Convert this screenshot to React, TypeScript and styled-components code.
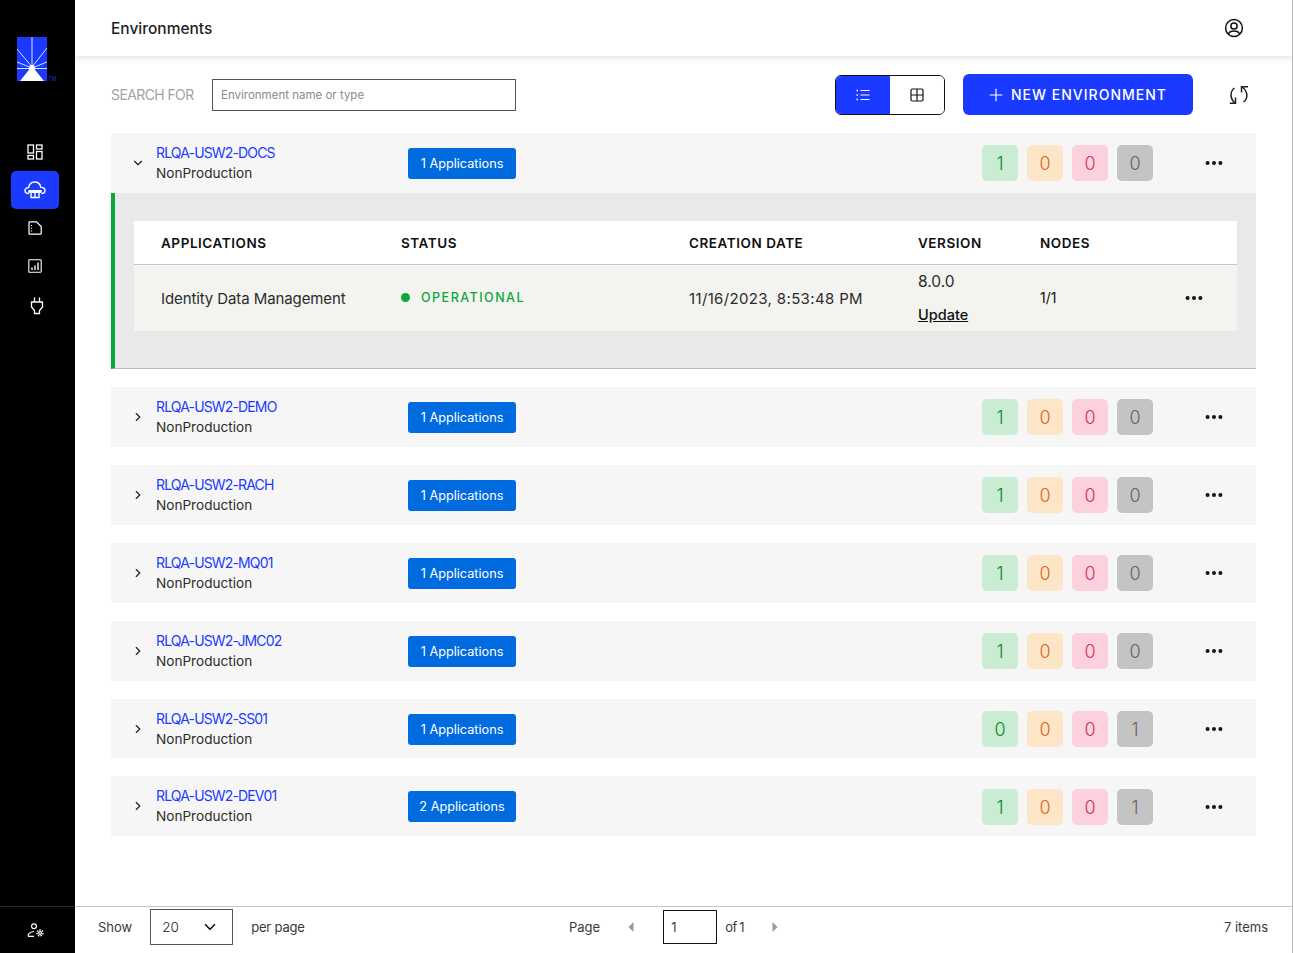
import React from "react"
import styled, { createGlobalStyle } from "styled-components"
import { ChevronDown, ChevronRight, Ellipsis, Plus } from "lucide-react"

const GlobalStyle = createGlobalStyle`
  html, body {
    margin: 0;
    padding: 0;
    height: 100%;
    background: #fff;
    font-family: Inter, "Liberation Sans", sans-serif;
    color: #1f1f24;
  }
  * { box-sizing: border-box; }
`

const Shell = styled.div`
  display: flex;
  height: 953px;
  overflow: hidden;
  border-right: 1px solid #b9b9b9;
`

const Sidebar = styled.nav`
  width: 75px;
  flex-shrink: 0;
  background: #000;
  display: flex;
  flex-direction: column;
  padding-top: 37px;
`

const LogoWrap = styled.div`
  width: 75px;
  height: 44px;
  padding-left: 17px;
  margin-bottom: 52px;
`

const NavList = styled.div`
  display: flex;
  flex-direction: column;
  padding-left: 11px;
  flex: 1;
`

const NavItem = styled.div<{ $active?: boolean }>`
  width: 48px;
  height: 38px;
  border-radius: 5px;
  display: flex;
  align-items: center;
  justify-content: center;
  background: ${(p) => (p.$active ? "#1a3bff" : "transparent")};
  color: #fff;
`

const SideFoot = styled.div`
  width: 75px;
  height: 47px;
  padding-right: 5px;
  display: flex;
  align-items: center;
  justify-content: center;
  color: #fff;
  border-top: 1px solid #2a2a2a;
`

const Main = styled.main`
  flex: 1;
  min-width: 0;
  display: flex;
  flex-direction: column;
`

const Header = styled.header`
  height: 56px;
  flex-shrink: 0;
  display: flex;
  align-items: center;
  justify-content: space-between;
  padding: 0 48px 0 36px;
  box-shadow: 0 2px 6px rgba(0, 0, 0, 0.12);
`

const Title = styled.h1`
  margin: 0;
  font-size: 15.5px;
  font-weight: 500;
  color: #1f1f24;
`

const Toolbar = styled.div`
  display: flex;
  align-items: center;
  height: 41px;
  margin: 18px 36px 18px 36px;
`

const SearchLabel = styled.span`
  width: 101px;
  font-size: 14px;
  letter-spacing: -0.6px;
  color: #a3a3a3;
`

const SearchInput = styled.div`
  width: 304px;
  height: 32px;
  border: 1px solid #555;
  font-size: 11.5px;
  color: #8b8b8b;
  display: flex;
  align-items: center;
  padding-left: 8px;
`

const ViewToggle = styled.div`
  display: flex;
  width: 110px;
  height: 40px;
  margin-left: auto;
  border: 1px solid #111;
  border-radius: 6px;
  overflow: hidden;
`

const ViewButton = styled.div<{ $active?: boolean }>`
  flex: 1;
  display: flex;
  align-items: center;
  justify-content: center;
  background: ${(p) => (p.$active ? "#1a3bff" : "#fff")};
  color: ${(p) => (p.$active ? "#fff" : "#111")};
`

const NewButton = styled.div`
  width: 230px;
  height: 41px;
  margin-left: 18px;
  padding-right: 3px;
  border-radius: 6px;
  background: #1a3bff;
  color: #fff;
  display: flex;
  align-items: center;
  justify-content: center;
  gap: 5px;
  font-size: 14px;
  font-weight: 500;
  letter-spacing: 1px;
`

const RefreshWrap = styled.div`
  width: 63px;
  display: flex;
  justify-content: flex-end;
  padding-right: 7px;
  color: #222;
`

const List = styled.div`
  display: flex;
  flex-direction: column;
  gap: 18px;
  margin: 0 36px;
`

const Group = styled.section``

const Row = styled.div`
  height: 59.9px;
  background: #f6f6f6;
  display: flex;
  align-items: center;
`

const Caret = styled.div`
  width: 45px;
  display: flex;
  justify-content: flex-end;
  padding-right: 11px;
  color: #222;
`

const NameCell = styled.div`
  width: 252px;
  display: flex;
  flex-direction: column;
  gap: 4px;
`

const EnvName = styled.a`
  font-size: 14px;
  line-height: 17px;
  letter-spacing: -0.85px;
  color: #1a3bff;
`

const EnvType = styled.span`
  font-size: 13.6px;
  line-height: 17px;
  color: #2b2b2b;
`

const AppsButton = styled.div`
  width: 108px;
  height: 31px;
  margin-top: 1px;
  background: #006bdf;
  color: #fff;
  border-radius: 3px;
  font-size: 12.7px;
  display: flex;
  align-items: center;
  justify-content: center;
`

const Counts = styled.div`
  display: flex;
  gap: 9px;
  margin: 1px 0 0 auto;
`

const tones = {
  green: { bg: "#c9ecd2", fg: "#0c8a2b" },
  orange: { bg: "#fde5c8", fg: "#e0661c" },
  red: { bg: "#fcd0dc", fg: "#d1345b" },
  gray: { bg: "#c4c4c4", fg: "#666" },
}

const Count = styled.div<{ $tone: keyof typeof tones }>`
  width: 36px;
  height: 36px;
  border-radius: 5px;
  display: flex;
  align-items: center;
  justify-content: center;
  padding-top: 1px;
  font-size: 18px;
  font-weight: 300;
  background: ${(p) => tones[p.$tone].bg};
  color: ${(p) => tones[p.$tone].fg};
`

const MoreCell = styled.div`
  width: 103px;
  display: flex;
  justify-content: flex-end;
  margin-top: 1px;
  padding-right: 31px;
  color: #111;
`

const Expansion = styled.div`
  height: 176.12px;
  background: #e9e9e9;
  border-left: 4px solid #0aa83c;
  border-bottom: 1px solid #bdbdbd;
  padding: 28px 19px 0 19px;
`

const Table = styled.div`
  height: 110px;
  background: #fff;
  display: flex;
  flex-direction: column;
`

const columns = "240px 288px 229px 122px 1fr"

const TableHead = styled.div`
  height: 44px;
  padding-top: 1px;
  display: grid;
  grid-template-columns: ${columns};
  align-items: center;
  padding-left: 27px;
  border-bottom: 1px solid #c4c4c4;
  font-size: 13.5px;
  font-weight: 600;
  letter-spacing: 0.55px;
  color: #111;
`

const TableRow = styled.div`
  flex: 1;
  display: grid;
  grid-template-columns: ${columns};
  align-items: center;
  padding-left: 27px;
  background: #f3f4f0;
  font-size: 15px;
  color: #2b2b2b;
`

const AppName = styled.span`
  margin-top: 1px;
  letter-spacing: -0.1px;
`

const DateCell = styled.span`
  margin-top: 1px;
  letter-spacing: 0.35px;
`

const Status = styled.div`
  display: flex;
  align-items: center;
  gap: 11px;
  font-size: 12.5px;
  font-weight: 500;
  letter-spacing: 1.5px;
  color: #0aa83c;
`

const Dot = styled.span`
  width: 9px;
  height: 9px;
  border-radius: 50%;
  background: #0aa83c;
`

const VersionCell = styled.div`
  display: flex;
  flex-direction: column;
  gap: 16px;
  line-height: 17px;
  font-size: 15.5px;
`

const UpdateLink = styled.a`
  font-size: 14.5px;
  font-weight: 500;
  color: #111;
  text-decoration: underline;
`

const NodesCell = styled.div`
  display: flex;
  align-items: center;
  justify-content: space-between;
  padding-right: 32px;
  font-size: 14px;
  color: #111;
`

const Footer = styled.footer`
  margin-top: auto;
  height: 47px;
  border-top: 1px solid #c4c4c4;
  display: flex;
  align-items: center;
  padding: 0 24px 6px 23px;
  font-size: 13px;
  color: #3a3a3a;
`

const ShowGroup = styled.div`
  display: flex;
  align-items: center;
  width: 471px;
`

const PageSize = styled.div`
  width: 83px;
  height: 36px;
  margin: 0 18px;
  border: 1px solid #555;
  display: flex;
  align-items: center;
  justify-content: space-between;
  padding: 0 13px 0 11px;
  font-size: 13.5px;
  font-weight: 300;
  color: #222;
`

const PerPage = styled.span`
  letter-spacing: -0.2px;
`

const Pager = styled.div`
  display: flex;
  align-items: center;
`

const PagerArrow = styled.svg<{ $gap: number }>`
  width: 6px;
  height: 10px;
  margin-left: ${(p) => p.$gap}px;
  color: #9a9a9a;
`

const PageInput = styled.div`
  width: 54px;
  height: 34px;
  border: 1px solid #111;
  display: flex;
  align-items: center;
  padding-left: 7px;
  margin: 0 8px 0 29px;
`

const PageTotal = styled.span`
  letter-spacing: -0.4px;
  word-spacing: -1px;
`

const ItemsCount = styled.span`
  margin-left: auto;
`

const Logo = () => (
  <svg width="42" height="44" viewBox="0 0 42 44">
    <rect x="0" y="0" width="30" height="44" fill="#1a3bff" />
    <g stroke="#d9e0ff" strokeWidth="1">
      <line x1="15" y1="0" x2="15" y2="30" />
      <line x1="0" y1="12" x2="15" y2="30" />
      <line x1="30" y1="11" x2="15" y2="30" />
      <line x1="0" y1="25" x2="15" y2="31" />
      <line x1="30" y1="25" x2="15" y2="31" />
      <line x1="0" y1="31.5" x2="30" y2="31.5" />
    </g>
    <path d="M15 29 L27 44 L3 44 Z" fill="#fff" />
    <circle cx="15" cy="31" r="3" fill="#fff" />
    <text x="31" y="43.5" fontSize="5.5" fill="#1a34c8" fontFamily="Inter, sans-serif">
      TM
    </text>
  </svg>
)

const DashboardIcon = () => (
  <svg width="16" height="16" viewBox="0 0 16 16" fill="none" stroke="currentColor" strokeWidth="1.3">
    <rect x="1" y="1" width="5.5" height="8" />
    <rect x="9.5" y="1" width="5.5" height="4" />
    <rect x="1" y="11.5" width="5.5" height="3.5" />
    <rect x="9.5" y="7.5" width="5.5" height="7.5" />
  </svg>
)

const CloudIcon = () => (
  <svg width="22" height="18" viewBox="0 0 22 18" fill="none" stroke="currentColor" strokeWidth="1.4">
    <path d="M4.8 12.5 C2 12.5 1 10.6 1 9.4 C1 7.6 2.6 6.4 4.6 6.6 C5.2 3.2 7.8 1 10.8 1 C13.8 1 16.2 3.2 16.8 6.4 C19.2 6.2 21 7.6 21 9.4 C21 11 19.8 12.5 17.4 12.5" />
    <path d="M5 9.6 H17 V11.2 H5 Z" fill="currentColor" />
    <path d="M7 11 V16.5 H15 V11 M11 11 V16.5" />
  </svg>
)

const FileIcon = () => (
  <svg width="14" height="14" viewBox="0 0 14 14" fill="none" stroke="currentColor" strokeWidth="1.2">
    <path d="M1 1.6 Q1 .8 1.8 .8 H8.5 L13.2 5.5 V12.4 Q13.2 13.2 12.4 13.2 H1.8 Q1 13.2 1 12.4 Z" />
    <path d="M3.5 4 V4.9 M3.5 6.8 V7.7 M3.5 9.6 V10.5" />
  </svg>
)

const ChartIcon = () => (
  <svg width="14" height="14" viewBox="0 0 14 14" fill="none" stroke="currentColor" strokeWidth="1.1">
    <rect x="0.8" y="0.8" width="12.4" height="12.4" rx="0.6" />
    <path d="M4 8.5 V11 M7 6.5 V11 M10 3.5 V11" strokeWidth="1.4" />
  </svg>
)

const PlugIcon = () => (
  <svg width="18" height="22" viewBox="-4 -4 18 22" fill="none" stroke="currentColor" strokeWidth="1.3">
    <path d="M4.5 0.5 V5 M9.5 0.5 V5" />
    <path d="M1.5 5 H12.5 V10 L9.5 13.5 V16.5 H4.5 V13.5 L1.5 10 Z" />
  </svg>
)

const UserGearIcon = () => (
  <svg width="17" height="15" viewBox="0 0 17 15" fill="none" stroke="currentColor" strokeWidth="1.2">
    <circle cx="7" cy="3.2" r="2.4" />
    <path d="M1 13.2 C1 10.5 3.5 9 7 8.5 M1 13.4 H7" />
    <circle cx="13" cy="10" r="1.4" />
    <circle cx="13" cy="10" r="3" strokeDasharray="1.6 1" strokeWidth="1.3" />
  </svg>
)

const AccountIcon = () => (
  <svg width="20" height="20" viewBox="0 0 20 20" fill="none" stroke="#111" strokeWidth="1.5">
    <circle cx="10" cy="10" r="8.4" />
    <circle cx="10" cy="8" r="3.1" />
    <path d="M4.4 16 C5.2 13.8 7.2 13 10 13 C12.8 13 14.8 13.8 15.6 16" />
  </svg>
)

const ListIcon = () => (
  <svg width="14" height="12" viewBox="0 0 14 12" fill="none" stroke="currentColor" strokeWidth="1">
    <path d="M4.5 1.5 H13.5 M4.5 6 H13.5 M4.5 10.5 H13.5" />
    <path d="M.5 1.5 H2 M.5 6 H2 M.5 10.5 H2" strokeWidth="1.5" />
  </svg>
)

const GridIcon = () => (
  <svg width="14" height="14" viewBox="0 0 14 14" fill="none" stroke="currentColor" strokeWidth="1.2">
    <rect x="1" y="1" width="12" height="12" rx="1.5" />
    <path d="M7 1 V13 M1 7 H13" />
  </svg>
)

const RefreshIcon = () => (
  <svg width="20" height="18" viewBox="0 0 20 18" fill="none" stroke="currentColor" strokeWidth="1.5">
    <path d="M5.5 2 C0.8 5.5 0.8 12.5 6 17" />
    <path d="M0.8 17.2 H6.5 V11.5" />
    <path d="M14.5 16 C19.2 12.5 19.2 5.5 13 1" />
    <path d="M19 0.8 H12.5 V6.5" />
  </svg>
)

const environments = [
  { name: "RLQA-USW2-DOCS", apps: 1, counts: [1, 0, 0, 0], open: true },
  { name: "RLQA-USW2-DEMO", apps: 1, counts: [1, 0, 0, 0] },
  { name: "RLQA-USW2-RACH", apps: 1, counts: [1, 0, 0, 0] },
  { name: "RLQA-USW2-MQ01", apps: 1, counts: [1, 0, 0, 0] },
  { name: "RLQA-USW2-JMC02", apps: 1, counts: [1, 0, 0, 0] },
  { name: "RLQA-USW2-SS01", apps: 1, counts: [0, 0, 0, 1] },
  { name: "RLQA-USW2-DEV01", apps: 2, counts: [1, 0, 0, 1] },
]

const toneOrder: (keyof typeof tones)[] = ["green", "orange", "red", "gray"]

export default function App() {
  return (
    <>
      <GlobalStyle />
      <Shell>
        <Sidebar>
          <LogoWrap>
            <Logo />
          </LogoWrap>
          <NavList>
            <NavItem><DashboardIcon /></NavItem>
            <NavItem $active><CloudIcon /></NavItem>
            <NavItem><FileIcon /></NavItem>
            <NavItem><ChartIcon /></NavItem>
            <NavItem><PlugIcon /></NavItem>
          </NavList>
          <SideFoot><UserGearIcon /></SideFoot>
        </Sidebar>
        <Main>
          <Header>
            <Title>Environments</Title>
            <AccountIcon />
          </Header>
          <Toolbar>
            <SearchLabel>SEARCH FOR</SearchLabel>
            <SearchInput>Environment name or type</SearchInput>
            <ViewToggle>
              <ViewButton $active><ListIcon /></ViewButton>
              <ViewButton><GridIcon /></ViewButton>
            </ViewToggle>
            <NewButton>
              <Plus size={20} strokeWidth={1.4} />
              NEW ENVIRONMENT
            </NewButton>
            <RefreshWrap><RefreshIcon /></RefreshWrap>
          </Toolbar>
          <List>
            {environments.map((env) => (
              <Group key={env.name}>
                <Row>
                  <Caret>
                    {env.open ? <ChevronDown size={14} strokeWidth={2} /> : <ChevronRight size={14} strokeWidth={2} />}
                  </Caret>
                  <NameCell>
                    <EnvName>{env.name}</EnvName>
                    <EnvType>NonProduction</EnvType>
                  </NameCell>
                  <AppsButton>{env.apps} Applications</AppsButton>
                  <Counts>
                    {env.counts.map((n, i) => (
                      <Count key={i} $tone={toneOrder[i]}>{n}</Count>
                    ))}
                  </Counts>
                  <MoreCell><Ellipsis size={22} strokeWidth={2.4} /></MoreCell>
                </Row>
                {env.open && (
                  <Expansion>
                    <Table>
                      <TableHead>
                        <span>APPLICATIONS</span>
                        <span>STATUS</span>
                        <span>CREATION DATE</span>
                        <span>VERSION</span>
                        <span>NODES</span>
                      </TableHead>
                      <TableRow>
                        <AppName>Identity Data Management</AppName>
                        <Status><Dot />OPERATIONAL</Status>
                        <DateCell>11/16/2023, 8:53:48 PM</DateCell>
                        <VersionCell>
                          <span>8.0.0</span>
                          <UpdateLink>Update</UpdateLink>
                        </VersionCell>
                        <NodesCell>
                          <span>1/1</span>
                          <Ellipsis size={22} strokeWidth={2.4} />
                        </NodesCell>
                      </TableRow>
                    </Table>
                  </Expansion>
                )}
              </Group>
            ))}
          </List>
          <Footer>
            <ShowGroup>
              <span>Show</span>
              <PageSize>
                20
                <ChevronDown size={18} strokeWidth={2.2} color="#111" />
              </PageSize>
              <PerPage>per page</PerPage>
            </ShowGroup>
            <Pager>
              <span>Page</span>
              <PagerArrow $gap={28} viewBox="0 0 6 10">
                <path d="M5.5 0 L0.5 5 L5.5 10 Z" fill="currentColor" />
              </PagerArrow>
              <PageInput>1</PageInput>
              <PageTotal>of 1</PageTotal>
              <PagerArrow $gap={28} viewBox="0 0 6 10">
                <path d="M0.5 0 L5.5 5 L0.5 10 Z" fill="currentColor" />
              </PagerArrow>
            </Pager>
            <ItemsCount>7 items</ItemsCount>
          </Footer>
        </Main>
      </Shell>
    </>
  )
}
